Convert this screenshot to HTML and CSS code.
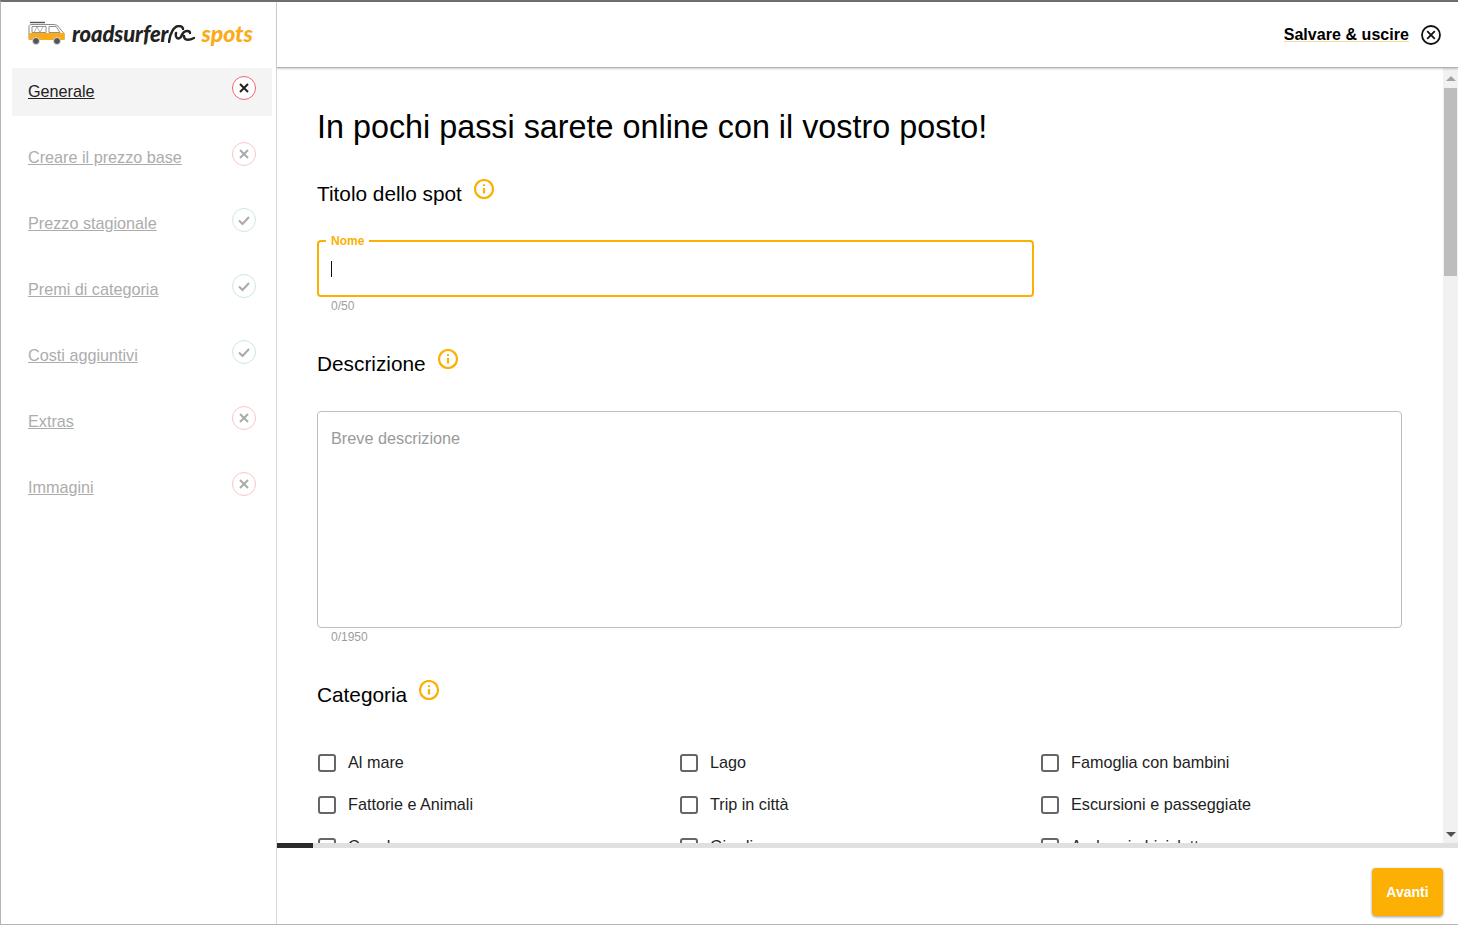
FILE: index.html
```html
<!DOCTYPE html>
<html lang="it">
<head>
<meta charset="utf-8">
<title>roadsurfer spots</title>
<link rel="stylesheet" href="styles.css">
</head>
<body>
<div class="frame">
  <aside class="sidebar">
    <div class="logo">
      <svg class="van" width="38" height="25" viewBox="0 0 38 25">
        <path d="M2 1.500h15" stroke="#555" stroke-width="1.400" fill="none"/>
        <path d="M3 3.500h22c3 0 5 1 6 3l5 6v6H1V5.500c0-1 1-2 2-2z" fill="#fff" stroke="#8a8a8a" stroke-width="1"/>
        <path d="M1 12h35.500v7H1z" fill="#fbab18"/>
        <path d="M4 5.500h14v6H4z" fill="#fff" stroke="#777" stroke-width=".8"/>
        <path d="M6 11.500l3-6 3 6 3-6" fill="none" stroke="#999" stroke-width=".7"/>
        <path d="M21 5.500h7l4 6H21z" fill="#fff" stroke="#777" stroke-width=".8"/>
        <circle cx="8" cy="20" r="3.500" fill="#555" stroke="#ddd"/>
        <circle cx="29" cy="20" r="3.500" fill="#555" stroke="#ddd"/>
      </svg>
      <span class="brand">roadsurfer</span>
      <svg class="wave" width="28" height="18" viewBox="0 0 28 18">
        <path d="M1 17C2 8 6 1 11 1c3 0 4 2 4 3M8 8c-1 5 2 7 5 4 1-3 3-6 6-6 2 0 3 1 3 2M16 11c0 4 4 5 10 2" fill="none" stroke="#222" stroke-width="2.400" stroke-linecap="round"/>
      </svg>
      <span class="spots">spots</span>
    </div>
    <nav class="steps">
      <div class="step active"><a href="#">Generale</a><span class="status err"><svg width="12" height="12" viewBox="0 0 12 12"><path d="M2 2l8 8M10 2l-8 8"/></svg></span></div>
      <div class="step"><a href="#">Creare il prezzo base</a><span class="status err"><svg width="12" height="12" viewBox="0 0 12 12"><path d="M2 2l8 8M10 2l-8 8"/></svg></span></div>
      <div class="step"><a href="#">Prezzo stagionale</a><span class="status ok"><svg width="14" height="12" viewBox="0 0 14 12"><path d="M2 6.500l3.500 3.500L12 3"/></svg></span></div>
      <div class="step"><a href="#">Premi di categoria</a><span class="status ok"><svg width="14" height="12" viewBox="0 0 14 12"><path d="M2 6.500l3.500 3.500L12 3"/></svg></span></div>
      <div class="step"><a href="#">Costi aggiuntivi</a><span class="status ok"><svg width="14" height="12" viewBox="0 0 14 12"><path d="M2 6.500l3.500 3.500L12 3"/></svg></span></div>
      <div class="step"><a href="#">Extras</a><span class="status err"><svg width="12" height="12" viewBox="0 0 12 12"><path d="M2 2l8 8M10 2l-8 8"/></svg></span></div>
      <div class="step"><a href="#">Immagini</a><span class="status err"><svg width="12" height="12" viewBox="0 0 12 12"><path d="M2 2l8 8M10 2l-8 8"/></svg></span></div>
    </nav>
  </aside>
  <div class="main">
    <header class="topbar">
      <a class="save" href="#">Salvare &amp; uscire</a>
      <svg class="close" width="20" height="20" viewBox="0 0 20 20"><circle cx="10" cy="10" r="9"/><path d="M6.200 6.200l7.600 7.600M13.800 6.200l-7.600 7.600"/></svg>
    </header>
    <div class="middle">
      <main class="content">
        <h1>In pochi passi sarete online con il vostro posto!</h1>
        <div class="section-title title-spot">
          <h2>Titolo dello spot</h2>
          <svg class="info" width="20" height="20" viewBox="0 0 20 20"><circle cx="10" cy="10" r="9"/><path d="M10 9v5.500M10 5.200v1.800"/></svg>
        </div>
        <fieldset class="name-field">
          <legend>Nome</legend>
          <span class="caret"></span>
        </fieldset>
        <div class="counter">0/50</div>
        <div class="section-title title-desc">
          <h2>Descrizione</h2>
          <svg class="info" width="20" height="20" viewBox="0 0 20 20"><circle cx="10" cy="10" r="9"/><path d="M10 9v5.500M10 5.200v1.800"/></svg>
        </div>
        <div class="desc-box">Breve descrizione</div>
        <div class="counter">0/1950</div>
        <div class="section-title title-cat">
          <h2>Categoria</h2>
          <svg class="info" width="20" height="20" viewBox="0 0 20 20"><circle cx="10" cy="10" r="9"/><path d="M10 9v5.500M10 5.200v1.800"/></svg>
        </div>
        <div class="cats">
          <label class="cat"><span class="box"></span>Al mare</label>
          <label class="cat"><span class="box"></span>Lago</label>
          <label class="cat"><span class="box"></span>Famoglia con bambini</label>
          <label class="cat"><span class="box"></span>Fattorie e Animali</label>
          <label class="cat"><span class="box"></span>Trip in città</label>
          <label class="cat"><span class="box"></span>Escursioni e passeggiate</label>
          <label class="cat"><span class="box"></span>Canale</label>
          <label class="cat"><span class="box"></span>Giardino</label>
          <label class="cat"><span class="box"></span>Andare in bicicletta</label>
        </div>
      </main>
      <div class="scrollbar">
        <span class="arrow up"></span>
        <div class="track"><div class="thumb"></div></div>
        <span class="arrow down"></span>
      </div>
    </div>
    <div class="progress"><div class="progress-fill"></div></div>
    <footer class="footer"><button class="next" type="button">Avanti</button></footer>
  </div>
</div>
</body>
</html>
```
FILE: styles.css
```css
* { box-sizing: border-box; }
html, body { margin: 0; height: 100%; overflow: hidden; }
body { background: #fff; font-family: "Liberation Sans", Arial, sans-serif; color: #000; }
.frame {
  width: 1458px; height: 925px; display: flex;
  border-top: 2px solid #6e6e6e; border-left: 1px solid #b5b5b5; border-bottom: 1px solid #b5b5b5;
}
.sidebar { width: 276px; flex: none; border-right: 1px solid #d9d9d9; }
.logo { height: 66px; padding: 17px 0 0 27px; display: flex; align-items: flex-start; }
.van { margin-top: 2px; flex: none; }
.brand { margin-left: 6px; font: italic 900 22px/30px Lato, sans-serif; color: #222; letter-spacing: -.1px; }
.wave { margin: 6px 0 0 0; flex: none; }
.spots { margin: -1px 0 0 5px; font: italic 900 23px/30px Lato, sans-serif; color: #fbab18; }
.steps { display: flex; flex-direction: column; gap: 18px; padding-left: 11px; width: 271px; }
.step { height: 48px; padding: 0 16px; display: flex; justify-content: space-between; align-items: center; font-size: 16.2px; }
.step a { color: #9e9e9e; text-decoration: underline; opacity: .85; margin-top: -1px; }
.step.active { background: #f4f4f4; }
.step.active a { color: #222; opacity: 1; }
.status {
  width: 24px; height: 24px; border-radius: 50%; border: 1px solid; background: #fff;
  display: flex; align-items: center; justify-content: center; margin-top: -9px;
}
.status svg { fill: none; stroke: #aaa; stroke-width: 2; }
.status.err { border-color: #fbc6c6; }
.status.ok { border-color: #c9e8e1; }
.step.active .status { border-color: #f2646a; }
.step.active .status svg { stroke: #222; }
.main { flex: 1; min-width: 0; display: flex; flex-direction: column; }
.topbar {
  height: 66px; flex: none; display: flex; justify-content: flex-end; align-items: center; gap: 12px;
  padding: 0 17px 0 0; border-bottom: 1px solid #b0b0b0; box-shadow: 0 1px 2px rgba(0,0,0,.2); position: relative;
}
.save { font-size: 16px; font-weight: 700; color: #000; text-decoration: underline; text-decoration-color: #f7dca0; text-underline-offset: 1px; line-height: 18px; letter-spacing: .05px; }
.close { fill: none; stroke: #111; stroke-width: 1.8; }
.middle { height: 775px; flex: none; display: flex; overflow: hidden; }
.content { flex: 1; min-width: 0; overflow: hidden; padding: 37px 41px 0 40px; }
h1 { margin: 0; font-size: 32.350px; font-weight: 400; line-height: 44px; }
.section-title { display: flex; align-items: flex-start; }
.section-title h2 { margin: 0; font-size: 20.800px; font-weight: 400; line-height: 28px; }
.info { margin: -1px 0 0 12px; fill: none; stroke: #fbb003; stroke-width: 2.2; }
.title-spot { margin-top: 31px; }
.title-desc { margin-top: 37px; }
.title-cat { margin-top: 37px; }
.name-field {
  margin: 26px 0 0; padding: 0 12px; width: 717px; height: 63px;
  border: 2px solid #fbb003; border-radius: 4px; display: block;
}
.name-field legend { padding: 0 5px; margin-left: -5px; font-size: 12px; line-height: 14px; font-weight: 700; color: #fbb003; }
.caret { display: block; width: 1px; height: 16px; background: #111; margin-top: 13px; }
.counter { margin: 2px 0 0 14px; font-size: 12px; line-height: 14px; color: #9e9e9e; }
.desc-box {
  margin-top: 33px; width: 1085px; height: 217px; border: 1px solid #bdbdbd; border-radius: 4px;
  padding: 17px 13px; font-size: 16.250px; line-height: 19px; color: #9a9a9a;
}
.cats { margin-top: 44px; padding-left: 1px; display: grid; grid-template-columns: 362px 361px 1fr; row-gap: 24px; }
.cat { display: flex; align-items: center; gap: 12px; height: 18px; font-size: 16.200px; color: #222; white-space: nowrap; }
.box { width: 18px; height: 18px; flex: none; border: 2px solid #666; border-radius: 3px; margin-top: 2px; }
.scrollbar { width: 15px; flex: none; background: #f1f1f1; display: flex; flex-direction: column; align-items: center; }
.arrow { flex: none; width: 0; height: 0; border-left: 5px solid transparent; border-right: 5px solid transparent; }
.arrow.up { border-bottom: 5px solid #a3a3a3; margin: 8px 0 7px; }
.arrow.down { border-top: 5px solid #505050; margin: 7px 0 6px; }
.track { flex: 1; width: 100%; padding: 0 1px 0 1px; }
.thumb { height: 188px; background: #bdbdbd; }
.progress { height: 5px; flex: none; background: #e0e0e0; }
.progress-fill { width: 36px; height: 100%; background: #2b2b2b; }
.footer { flex: 1; display: flex; justify-content: flex-end; align-items: flex-start; padding: 20px 15px 0 0; }
.next {
  width: 71px; height: 48px; border: 0; border-radius: 4px; background: #fbb003; color: #fff;
  font: 700 14px "Liberation Sans", sans-serif; box-shadow: 0 1px 3px rgba(0,0,0,.4);
}
```
